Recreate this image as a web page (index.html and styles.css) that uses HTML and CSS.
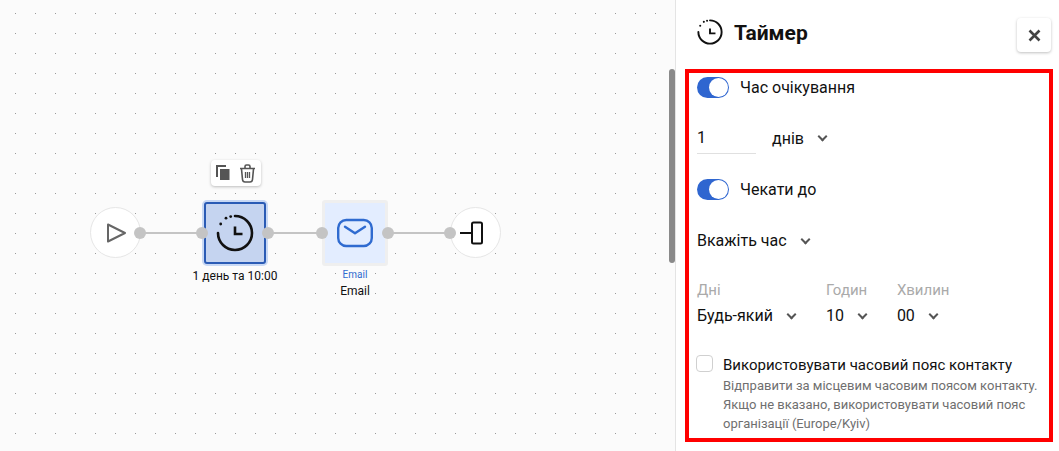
FILE: index.html
```html
<!DOCTYPE html>
<html lang="uk">
<head>
    <meta charset="UTF-8">
    <meta name="viewport" content="width=device-width, initial-scale=1.0">
    <title>Таймер</title>
    <link rel="stylesheet" href="styles.css">
</head>
<body>
    <div class="page">
        <div class="canvas">
            <!-- Лінії між вузлами -->
            <div class="edge edge-1"></div>
            <div class="edge edge-2"></div>
            <div class="edge edge-3"></div>

            <div class="node-circle node-start">
                <svg width="22" height="22" viewBox="0 0 22 22"><path d="M3 2.5 L20 11 L3 19.5 Z" fill="none" stroke="#666" stroke-width="2" stroke-linejoin="round"/></svg>
            </div>

            <div class="node-toolbar">
                <svg width="14" height="16" viewBox="0 0 14 16"><path d="M1 12 V1 H10" fill="none" stroke="#555" stroke-width="2"/><rect x="4" y="4" width="9.5" height="11" fill="#555"/></svg>
                <svg width="17" height="19" viewBox="0 0 17 19"><path d="M1 4.5 H16 M6 4 V2.5 Q6 1 7.5 1 H9.5 Q11 1 11 2.5 V4 M2.5 5 L3.5 15.5 Q3.8 18 6 18 H11 Q13.2 18 13.5 15.5 L14.5 5" fill="none" stroke="#555" stroke-width="1.6"/><path d="M6.5 8 V14 M8.5 8 V14 M10.5 8 V14" stroke="#555" stroke-width="1.3"/></svg>
            </div>

            <div class="node-box node-timer">
                <svg width="38" height="38" viewBox="0 0 38 38"><path d="M19 2 A17 17 0 1 1 2 19" fill="none" stroke="#111" stroke-width="2.6" stroke-linecap="round"/><circle cx="14.7" cy="2.6" r="1.4" fill="#111"/><circle cx="10" cy="4.2" r="1.4" fill="#111"/><circle cx="4.7" cy="10" r="1.4" fill="#111"/><path d="M19 12.5 V20 H26.5" fill="none" stroke="#111" stroke-width="2.6"/></svg>
            </div>
            <div class="node-caption caption-timer">1 день та 10:00</div>

            <div class="node-box node-email">
                <svg width="38" height="32" viewBox="0 0 38 32"><rect x="2.2" y="3" width="33.6" height="26" rx="8" fill="none" stroke="#2f6bd0" stroke-width="2.4"/><path d="M9 9.7 L19 16.3 L29 9.7" fill="none" stroke="#2f6bd0" stroke-width="2.4" stroke-linecap="round" stroke-linejoin="round"/></svg>
            </div>
            <div class="node-caption caption-email">
                <span class="caption-type">Email</span>
                <span>Email</span>
            </div>

            <div class="node-circle node-end">
                <svg width="23" height="24" viewBox="0 0 23 24"><path d="M0 12 H12" stroke="#111" stroke-width="2"/><rect x="12" y="1.5" width="10" height="21" rx="1.5" fill="none" stroke="#111" stroke-width="2"/></svg>
            </div>

            <span class="port port-1"></span>
            <span class="port port-2"></span>
            <span class="port port-3"></span>
            <span class="port port-4"></span>
            <span class="port port-5"></span>
            <span class="port port-6"></span>

            <div class="scrollbar"></div>
        </div>

        <aside class="panel">
            <div class="panel-header">
                <svg class="panel-icon" width="26" height="26" viewBox="0 0 38 38"><path d="M19 2 A17 17 0 1 1 2 19" fill="none" stroke="#111" stroke-width="2.8" stroke-linecap="round"/><circle cx="14.7" cy="2.6" r="1.5" fill="#111"/><circle cx="10" cy="4.2" r="1.5" fill="#111"/><circle cx="4.7" cy="10" r="1.5" fill="#111"/><path d="M19 14 V21 H27" fill="none" stroke="#111" stroke-width="2.8"/></svg>
                <h2 class="panel-title">Таймер</h2>
                <button class="close-btn">
                    <svg width="13" height="13" viewBox="0 0 13 13"><path d="M1.5 1.5 L11.5 11.5 M11.5 1.5 L1.5 11.5" stroke="#444" stroke-width="2.6"/></svg>
                </button>
            </div>

            <div class="panel-body">
                <div class="toggle-row">
                    <span class="toggle"></span>
                    <span>Час очікування</span>
                </div>

                <div class="wait-row">
                    <div class="number-input">1</div>
                    <div class="select">днів <i class="chevron"></i></div>
                </div>

                <div class="toggle-row toggle-until">
                    <span class="toggle"></span>
                    <span>Чекати до</span>
                </div>

                <div class="select select-time">Вкажіть час <i class="chevron"></i></div>

                <div class="fields">
                    <div class="field">
                        <div class="field-label">Дні</div>
                        <div class="select">Будь-який <i class="chevron"></i></div>
                    </div>
                    <div class="field">
                        <div class="field-label">Годин</div>
                        <div class="select">10 <i class="chevron"></i></div>
                    </div>
                    <div class="field">
                        <div class="field-label">Хвилин</div>
                        <div class="select">00 <i class="chevron"></i></div>
                    </div>
                </div>

                <div class="tz-row">
                    <span class="checkbox"></span>
                    <div>
                        <div class="tz-title">Використовувати часовий пояс контакту</div>
                        <div class="tz-hint">Відправити за місцевим часовим поясом контакту. Якщо не вказано, використовувати часовий пояс організації (Europe/Kyiv)</div>
                    </div>
                </div>
            </div>
        </aside>
    </div>
</body>
</html>
```

FILE: styles.css
```css
* {
    box-sizing: border-box;
}

html,
body {
    margin: 0;
    height: 100%;
    overflow: hidden;
}

body {
    font-family: Roboto, Arial, sans-serif;
    color: #111;
    background: #fff;
}

.page {
    display: flex;
    height: 451px;
}

/* Полотно */
.canvas {
    position: relative;
    width: 676px;
    flex-shrink: 0;
    border-right: 1px solid #e4e4e4;
    background-color: #fbfbfb;
    background-image: radial-gradient(circle at 0.5px 0.5px, #9a9a9a 0.7px, transparent 0.8px);
    background-size: 20px 20px;
    background-position: 15px 13px;
}

.scrollbar {
    position: absolute;
    left: 669px;
    top: 69px;
    width: 6px;
    height: 194px;
    border-radius: 3px;
    background: #8a8a8a;
}

.edge {
    position: absolute;
    top: 232px;
    height: 2px;
    background: #c4c4c4;
}

.edge-1 {
    left: 140px;
    width: 62px;
}

.edge-2 {
    left: 268px;
    width: 54px;
}

.edge-3 {
    left: 388px;
    width: 62px;
}

.port {
    position: absolute;
    top: 227px;
    width: 12px;
    height: 12px;
    border-radius: 50%;
    background: #c4c4c4;
}

.port-1 { left: 134px; }
.port-2 { left: 196px; }
.port-3 { left: 262px; }
.port-4 { left: 316px; }
.port-5 { left: 382px; }
.port-6 { left: 444px; }

.node-circle {
    position: absolute;
    top: 207px;
    width: 51px;
    height: 51px;
    border: 1px solid #e6e6e6;
    border-radius: 50%;
    background: #fff;
    display: flex;
    align-items: center;
    justify-content: center;
}

.node-start {
    left: 90px;
}

.node-end {
    left: 450px;
}

.node-end svg {
    margin-right: 8px;
}

.node-box {
    position: absolute;
    top: 200px;
    width: 66px;
    height: 66px;
    display: flex;
    align-items: center;
    justify-content: center;
}

.node-timer {
    left: 202px;
    width: 62px;
    height: 62px;
    margin: 2px;
    background: #c5d4f0;
    border: 2px solid #2a5bb5;
    border-radius: 3px;
    box-shadow: 0 0 0 2px #c8d8f4;
}

.node-email {
    left: 322px;
    background: #e3edff;
    border: 3px solid #efefef;
    border-radius: 3px;
}

.node-toolbar {
    position: absolute;
    left: 211px;
    top: 160px;
    width: 50px;
    height: 26px;
    border-radius: 4px;
    background: #fff;
    box-shadow: 0 1px 3px rgba(0, 0, 0, 0.25);
    display: flex;
    align-items: center;
    justify-content: center;
    gap: 9px;
}

.node-caption {
    position: absolute;
    text-align: center;
    font-size: 12px;
    line-height: 16px;
}

.caption-timer {
    left: 175px;
    top: 268px;
    width: 120px;
}

.caption-email {
    left: 295px;
    top: 267px;
    width: 120px;
    display: flex;
    flex-direction: column;
}

.caption-type {
    font-size: 10px;
    line-height: 16px;
    color: #2f6bd0;
}

/* Права панель */
.panel {
    flex: 1;
    min-width: 0;
    padding: 18px 6px 0 9px;
}

.panel-header {
    display: flex;
    align-items: flex-start;
    height: 51px;
    padding-left: 12px;
}

.panel-icon {
    margin-top: 1px;
}

.panel-title {
    margin: 0 0 0 11px;
    font-size: 21px;
    line-height: 30px;
    font-weight: 700;
    flex: 1;
}

.close-btn {
    width: 34px;
    height: 34px;
    margin-right: 2px;
    padding: 0;
    border: none;
    border-radius: 4px;
    background: #fff;
    box-shadow: 0 1px 3px rgba(0, 0, 0, 0.25);
    display: flex;
    align-items: center;
    justify-content: center;
}

.panel-body {
    height: 373px;
    border: 4px solid #f00;
    padding: 4px 8px 0 8px;
    font-size: 16px;
}

.toggle-row {
    display: flex;
    align-items: flex-start;
    gap: 11px;
    height: 21px;
    line-height: 21px;
}

.toggle {
    position: relative;
    display: block;
    width: 32px;
    height: 21px;
    border-radius: 11px;
    background: #2f66d0;
}

.toggle::after {
    content: "";
    position: absolute;
    right: 1px;
    top: 1px;
    width: 19px;
    height: 19px;
    border-radius: 50%;
    background: #fff;
}

.wait-row {
    display: flex;
    align-items: flex-end;
    gap: 16px;
    margin-top: 28px;
}

.number-input {
    width: 59px;
    height: 28px;
    line-height: 24px;
    border-bottom: 1px solid #e0e0e0;
}

.select {
    display: flex;
    align-items: center;
    line-height: 24px;
}

.wait-row .select {
    height: 28px;
    padding-bottom: 3px;
}

.chevron {
    width: 7px;
    height: 7px;
    margin: -4px 3px 0 15px;
    border-right: 2px solid #555;
    border-bottom: 2px solid #555;
    transform: rotate(45deg);
}

.toggle-until {
    margin-top: 25px;
}

.select-time {
    margin-top: 29px;
}

.fields {
    display: flex;
    gap: 28px;
    margin-top: 27px;
}

.field-label {
    font-size: 15px;
    line-height: 20px;
    color: #aaa;
}

.field .select {
    margin-top: 4px;
}

.tz-row {
    display: flex;
    gap: 10px;
    margin: 27px 0 0 -1px;
}

.checkbox {
    flex-shrink: 0;
    width: 17px;
    height: 17px;
    border: 1px solid #d0d0d0;
    border-radius: 4px;
    background: #fff;
}

.tz-title {
    font-size: 15px;
    line-height: 20px;
}

.tz-hint {
    margin-top: 1px;
    font-size: 13px;
    line-height: 19px;
    color: #6f6f6f;
}
```
